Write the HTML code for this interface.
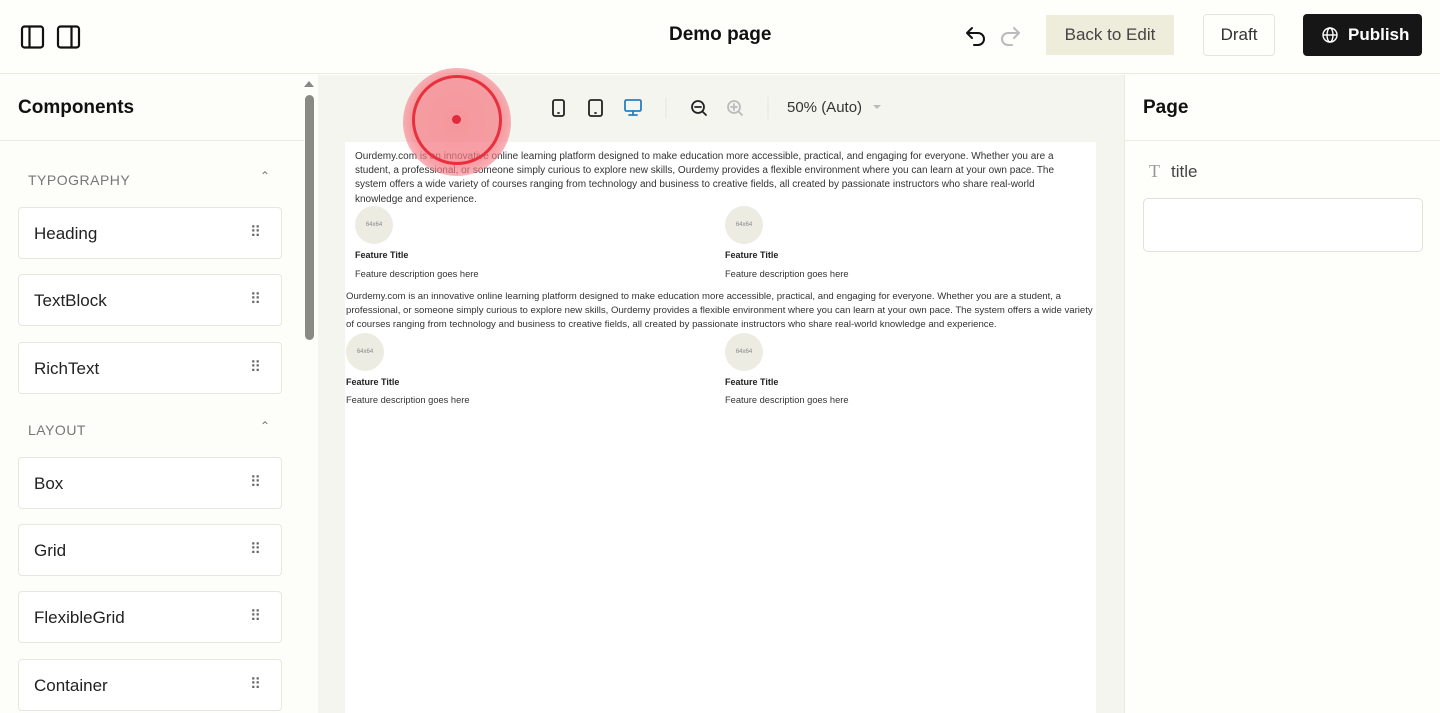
<!DOCTYPE html>
<html><head><meta charset="utf-8"><style>
*{box-sizing:border-box;margin:0;padding:0}
body{width:1440px;height:713px;overflow:hidden;background:#fefefa;font-family:"Liberation Sans",sans-serif;color:#111;position:relative}
.abs{position:absolute}
.hdr{left:0;top:0;width:1440px;height:74px;border-bottom:1px solid #ecebe2;background:#fefefb}
.left{left:0;top:75px;width:318px;height:638px;background:#fdfdf9}
.canvas{left:318px;top:75px;width:806px;height:638px;background:#f5f5ef}
.right{left:1124px;top:75px;width:316px;height:638px;background:#fefefa;border-left:1px solid #ecebe2}
.item{position:absolute;left:18px;width:264px;height:52px;border:1px solid #e8e7de;border-radius:4px;background:#fff;font-size:17px;padding:16px 0 0 15px;color:#222}
.item:after{content:"⠿";position:absolute;right:20px;top:15px;font-size:15px;color:#666}
.sec{position:absolute;left:28px;font-size:14px;color:#777;letter-spacing:.5px}
.car{position:absolute;left:260px;font-size:12px;color:#777}
.page{left:345px;top:142px;width:751px;height:571px;background:#fff}
.p{font-size:9.6px;line-height:14.2px;color:#333}
.circ{width:38px;height:38px;border-radius:50%;background:#ecece3;font-size:6px;color:#888;text-align:center;line-height:38px}
.ft{font-size:9px;font-weight:bold;color:#222}
.fd{font-size:9.3px;color:#333}
</style></head><body>
<div class="abs hdr"></div>
<svg class="abs" style="left:20px;top:25px" width="64" height="24" viewBox="0 0 64 24" fill="none" stroke="#111" stroke-width="2.2">
<rect x="2" y="1.5" width="21" height="21" rx="2.5"/><line x1="9.5" y1="2" x2="9.5" y2="22"/>
<rect x="38" y="1.5" width="21" height="21" rx="2.5"/><line x1="51.5" y1="2" x2="51.5" y2="22"/></svg>
<div class="abs" style="left:669px;top:24px;font-size:19px;font-weight:bold">Demo page</div>
<svg class="abs" style="left:964px;top:24px" width="60" height="22" viewBox="0 0 60 22" fill="none" stroke-width="2" stroke-linecap="round" stroke-linejoin="round">
<path d="M8 4 L3 9 L8 14 M3 9 H14 a6 6 0 0 1 0 12 H10" stroke="#111"/>
<path d="M50 4 L55 9 L50 14 M55 9 H44 a6 6 0 0 0 0 12 H48" stroke="#bbb"/></svg>
<div class="abs" style="left:1046px;top:15px;width:128px;height:40px;background:#eeeddc;font-size:17px;color:#444;text-align:center;line-height:40px">Back to Edit</div>
<div class="abs" style="left:1203px;top:14px;width:72px;height:42px;border:1px solid #e6e5dc;border-radius:4px;font-size:17px;color:#333;text-align:center;line-height:40px">Draft</div>
<div class="abs" style="left:1303px;top:14px;width:119px;height:42px;background:#161616;border-radius:4px;color:#fff;font-size:17px;font-weight:bold;line-height:42px;padding-left:45px">Publish</div>
<svg class="abs" style="left:1321px;top:26px" width="18" height="18" viewBox="0 0 18 18" fill="none" stroke="#fff" stroke-width="1.4"><circle cx="9" cy="9" r="7"/><ellipse cx="9" cy="9" rx="3" ry="7"/><line x1="2" y1="9" x2="16" y2="9"/></svg>

<div class="abs left">
<div class="abs" style="left:18px;top:22px;font-size:19px;font-weight:bold">Components</div>
<div class="abs" style="left:0;top:65px;width:304px;border-top:1px solid #ecebe2"></div>
<div class="sec" style="top:97px">TYPOGRAPHY</div><div class="car" style="top:94px">⌃</div>
<div class="item" style="top:132px">Heading</div>
<div class="item" style="top:199px">TextBlock</div>
<div class="item" style="top:267px">RichText</div>
<div class="sec" style="top:347px">LAYOUT</div><div class="car" style="top:344px">⌃</div>
<div class="item" style="top:382px">Box</div>
<div class="item" style="top:449px">Grid</div>
<div class="item" style="top:516px">FlexibleGrid</div>
<div class="item" style="top:584px">Container</div>
<div class="abs" style="left:304px;top:6px;width:0;height:0;border:5px solid transparent;border-bottom:6px solid #888;border-top:0"></div>
<div class="abs" style="left:305px;top:20px;width:9px;height:245px;background:#8a8a85;border-radius:5px"></div>
</div>

<div class="abs canvas"></div>
<svg class="abs" style="left:548px;top:97px" width="350" height="22" viewBox="0 0 350 22" fill="none" stroke-width="1.8" stroke-linecap="round">
<rect x="5" y="3" width="11" height="16" rx="2" stroke="#222"/><line x1="10" y1="16" x2="11" y2="16" stroke="#222"/>
<rect x="41" y="3" width="13" height="16" rx="2" stroke="#222"/><line x1="47" y1="16" x2="48" y2="16" stroke="#222"/>
<rect x="77" y="3" width="16" height="11" rx="1.5" stroke="#2a7fc0"/><line x1="85" y1="14" x2="85" y2="18" stroke="#2a7fc0"/><line x1="81" y1="18" x2="89" y2="18" stroke="#2a7fc0"/>
<circle cx="150" cy="10" r="6" stroke="#222"/><line x1="147" y1="10" x2="153" y2="10" stroke="#222"/><line x1="154.5" y1="14.5" x2="158" y2="18" stroke="#222"/>
<circle cx="186" cy="10" r="6" stroke="#bbb"/><line x1="183" y1="10" x2="189" y2="10" stroke="#bbb"/><line x1="186" y1="7" x2="186" y2="13" stroke="#bbb"/><line x1="190.5" y1="14.5" x2="194" y2="18" stroke="#bbb"/>
<line x1="220" y1="0" x2="220" y2="22" stroke="#e5e5dd" stroke-width="1"/><line x1="118" y1="0" x2="118" y2="22" stroke="#e5e5dd" stroke-width="1"/>
<path d="M325 8 l4 4 l4 -4z" fill="#bbb" stroke="none"/></svg>
<div class="abs" style="left:787px;top:99px;font-size:15px;color:#333">50% (Auto)</div>

<div class="abs page">
<div class="abs p" style="left:10px;top:8px;white-space:nowrap;font-size:10px">Ourdemy.com is an innovative online learning platform designed to make education more accessible, practical, and engaging for everyone. Whether you are a<br>student, a professional, or someone simply curious to explore new skills, Ourdemy provides a flexible environment where you can learn at your own pace. The<br>system offers a wide variety of courses ranging from technology and business to creative fields, all created by passionate instructors who share real-world<br>knowledge and experience.</div>
<div class="abs circ" style="left:10px;top:64px">64x64</div><div class="abs circ" style="left:380px;top:64px">64x64</div>
<div class="abs ft" style="left:10px;top:108px">Feature Title</div><div class="abs ft" style="left:380px;top:108px">Feature Title</div>
<div class="abs fd" style="left:10px;top:127px">Feature description goes here</div><div class="abs fd" style="left:380px;top:127px">Feature description goes here</div>
<div class="abs p" style="left:1px;top:148px;width:750px">Ourdemy.com is an innovative online learning platform designed to make education more accessible, practical, and engaging for everyone. Whether you are a student, a professional, or someone simply curious to explore new skills, Ourdemy provides a flexible environment where you can learn at your own pace. The system offers a wide variety of courses ranging from technology and business to creative fields, all created by passionate instructors who share real-world knowledge and experience.</div>
<div class="abs circ" style="left:1px;top:191px">64x64</div><div class="abs circ" style="left:380px;top:191px">64x64</div>
<div class="abs ft" style="left:1px;top:235px">Feature Title</div><div class="abs ft" style="left:380px;top:235px">Feature Title</div>
<div class="abs fd" style="left:1px;top:253px">Feature description goes here</div><div class="abs fd" style="left:380px;top:253px">Feature description goes here</div>
</div>

<div class="abs" style="left:403px;top:68px;width:108px;height:108px;border-radius:50%;background:radial-gradient(circle,rgba(245,120,130,.75) 0,rgba(245,120,130,.7) 60%,rgba(245,130,140,.2) 100%)"></div>
<div class="abs" style="left:412px;top:75px;width:90px;height:90px;border-radius:50%;border:3px solid #e8303e"></div>
<div class="abs" style="left:452px;top:115px;width:9px;height:9px;border-radius:50%;background:#e22a3a"></div>

<div class="abs right">
<div class="abs" style="left:18px;top:22px;font-size:19px;font-weight:bold">Page</div>
<div class="abs" style="left:0;top:65px;width:316px;border-top:1px solid #ecebe2"></div>
<div class="abs" style="left:24px;top:86px;font-size:18px;color:#999;font-family:'Liberation Serif',serif">T</div>
<div class="abs" style="left:46px;top:87px;font-size:17px;color:#444">title</div>
<div class="abs" style="left:18px;top:123px;width:280px;height:54px;border:1px solid #e3e2d9;border-radius:5px;background:#fff"></div>
</div>
</body></html>
